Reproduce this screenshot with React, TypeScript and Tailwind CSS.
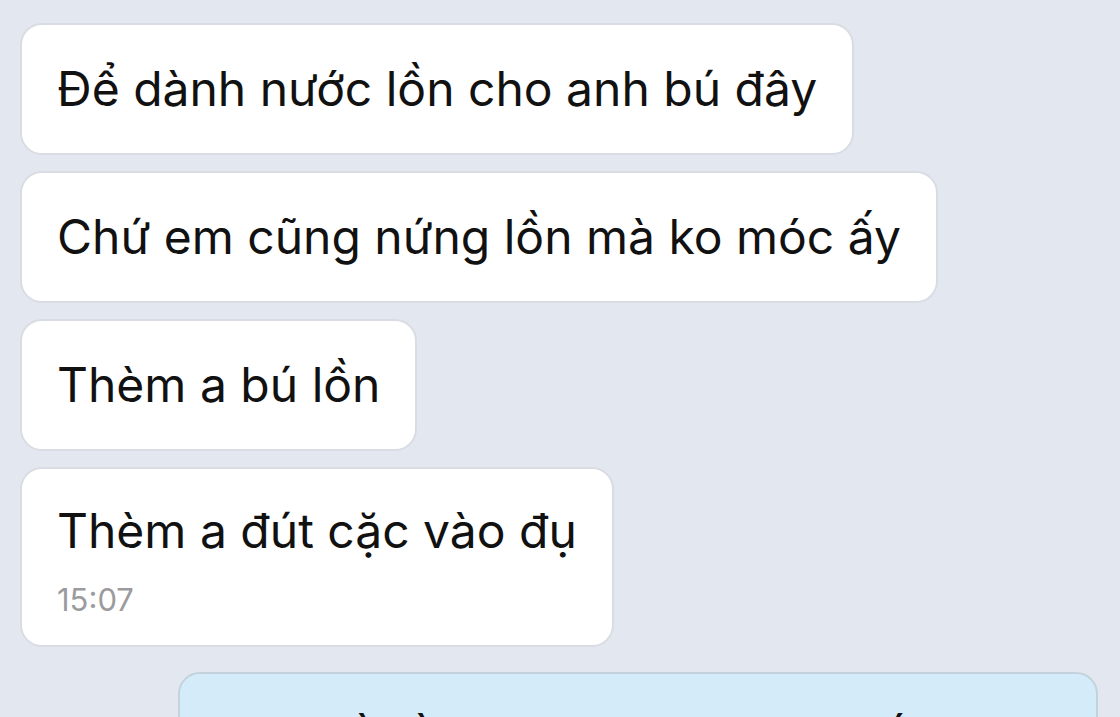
const messages = [
  'Để dành nước lồn cho anh bú đây',
  'Chứ em cũng nứng lồn mà ko móc ấy',
  'Thèm a bú lồn',
];

export default function App() {
  return (
    <div
      className="w-[1120px] h-[717px] overflow-hidden bg-[#e3e7f0] text-[#111111]"
      style={{ fontFamily: 'Inter, "Noto Sans", sans-serif' }}
    >
      <div className="flex flex-col items-start gap-4 pt-[23px] pl-5">
        {messages.map((m) => (
          <div
            key={m}
            className="h-[132px] flex items-center px-[35px] bg-white border-2 border-[#d9dce2] rounded-[22px]"
          >
            <span className="text-[48px] leading-none">{m}</span>
          </div>
        ))}
        <div className="h-[180px] flex flex-col justify-start pt-[38px] px-[35px] bg-white border-2 border-[#d9dce2] rounded-[22px]">
          <span className="text-[48px] leading-none">Thèm a đút cặc vào đụ</span>
          <span className="text-[31px] text-[#9b9b9e] mt-[29px] leading-none">15:07</span>
        </div>
      </div>
      <div className="flex justify-end pr-[22px] mt-[25px]">
        <div className="w-[920px] h-[140px] bg-[#d4ecf9] border-2 border-[#c3d2dc] rounded-[22px] px-[35px] pt-[42px]">
          <span className="text-[48px] leading-none">Anh về rồi tính nhé, chờ anh tối nay</span>
        </div>
      </div>
    </div>
  );
}
